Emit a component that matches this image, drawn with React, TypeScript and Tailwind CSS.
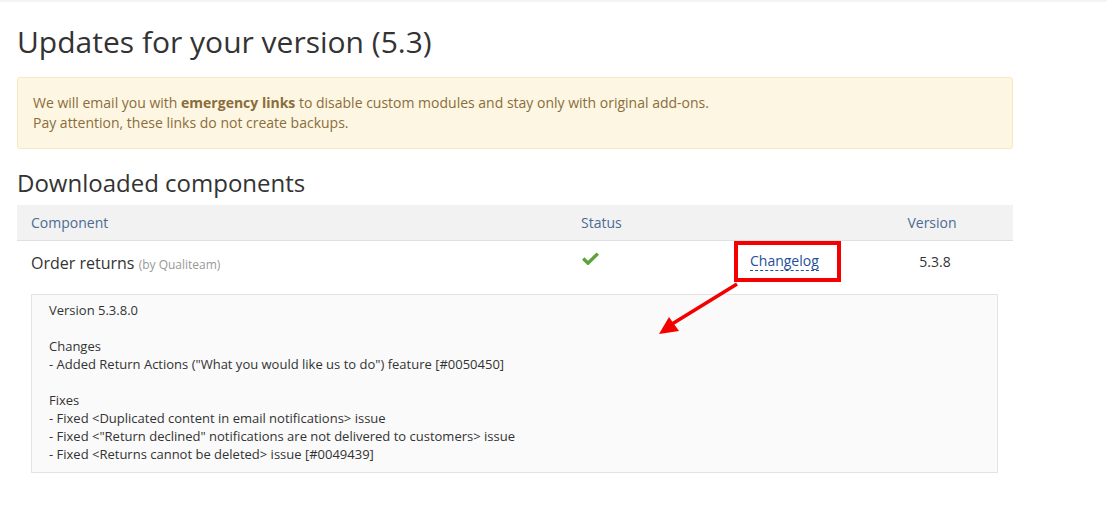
const changelog = `Version 5.3.8.0

Changes
- Added Return Actions ("What you would like us to do") feature [#0050450]

Fixes
- Fixed <Duplicated content in email notifications> issue
- Fixed <"Return declined" notifications are not delivered to customers> issue
- Fixed <Returns cannot be deleted> issue [#0049439]`;

function Check() {
  return (
    <svg width="17" height="13" viewBox="0 0 17 13" className="block">
      <path d="M1.2 6.6 L6 11.2 L15.8 1.6" fill="none" stroke="#5ca43a" strokeWidth="3.4" strokeLinejoin="miter" />
    </svg>
  );
}

export default function App() {
  return (
    <div className="relative min-h-[509px] bg-white border-t-2 border-[#f4f4f4] font-['Open_Sans',sans-serif] text-[#333]">
      <div className="w-[996px] ml-[17px]">
        <h1 className="pt-[20px] text-[30px] leading-[40px] text-[#333]">Updates for your version (5.3)</h1>

        <div className="mt-[15px] rounded-[3px] border border-[#f8e8c0] bg-[#fdf6e2] px-[15px] py-[15px] text-[14px] leading-[20px] text-[#8a6d3b]">
          We will email you with <b className="font-bold">emergency links</b> to disable custom modules and stay only with original add-ons.
          <br />
          Pay attention, these links do not create backups.
        </div>

        <h2 className="mt-[18px] text-[24px] leading-[32px] text-[#333]">Downloaded components</h2>

        <div className="mt-[6px]">
          <div className="grid grid-cols-[550px_153px_137px_156px] h-[36px] items-center bg-[#f2f2f2] border-b border-[#e0e0e0] text-[14px] text-[#4a6c92]">
            <div className="pl-[14px]">Component</div>
            <div className="pl-[14px]">Status</div>
            <div />
            <div className="text-center pr-[6px]">Version</div>
          </div>

          <div className="grid grid-cols-[550px_153px_137px_156px] h-[44px] items-start">
            <div className="pl-[14px] pt-[10px] text-[16px] leading-[24px] text-[#333]">
              Order returns <span className="text-[12px] text-[#999]">(by Qualiteam)</span>
            </div>
            <div className="pl-[15px] pt-[11px]">
              <Check />
            </div>
            <div className="flex">
              <div className="ml-[14px] w-[107px] h-[41px] border-4 border-[#f40000] flex items-center pl-[12px]">
                <span className="text-[14px] leading-[18px] text-[#1d4f9a] border-b border-dashed border-[#1d4f9a]">Changelog</span>
              </div>
            </div>
            <div className="pt-[11px] text-center text-[14px] leading-[20px] text-[#333]">5.3.8</div>
          </div>

          <div className="mt-[9px] ml-[14px] mr-[15px] border border-[#e3e3e3] bg-[#fafafa] pl-[17px] pt-[6px] pb-[9px] text-[13px] leading-[18px] text-[#333] whitespace-pre-line">
            {changelog}
          </div>
        </div>
      </div>

      <svg className="absolute left-0 top-0 pointer-events-none" width="1107" height="509">
        <line x1="737" y1="282" x2="672" y2="322" stroke="#f40000" strokeWidth="3.5" />
        <polygon points="659,332 669,315 679,329" fill="#f40000" />
      </svg>
    </div>
  );
}
